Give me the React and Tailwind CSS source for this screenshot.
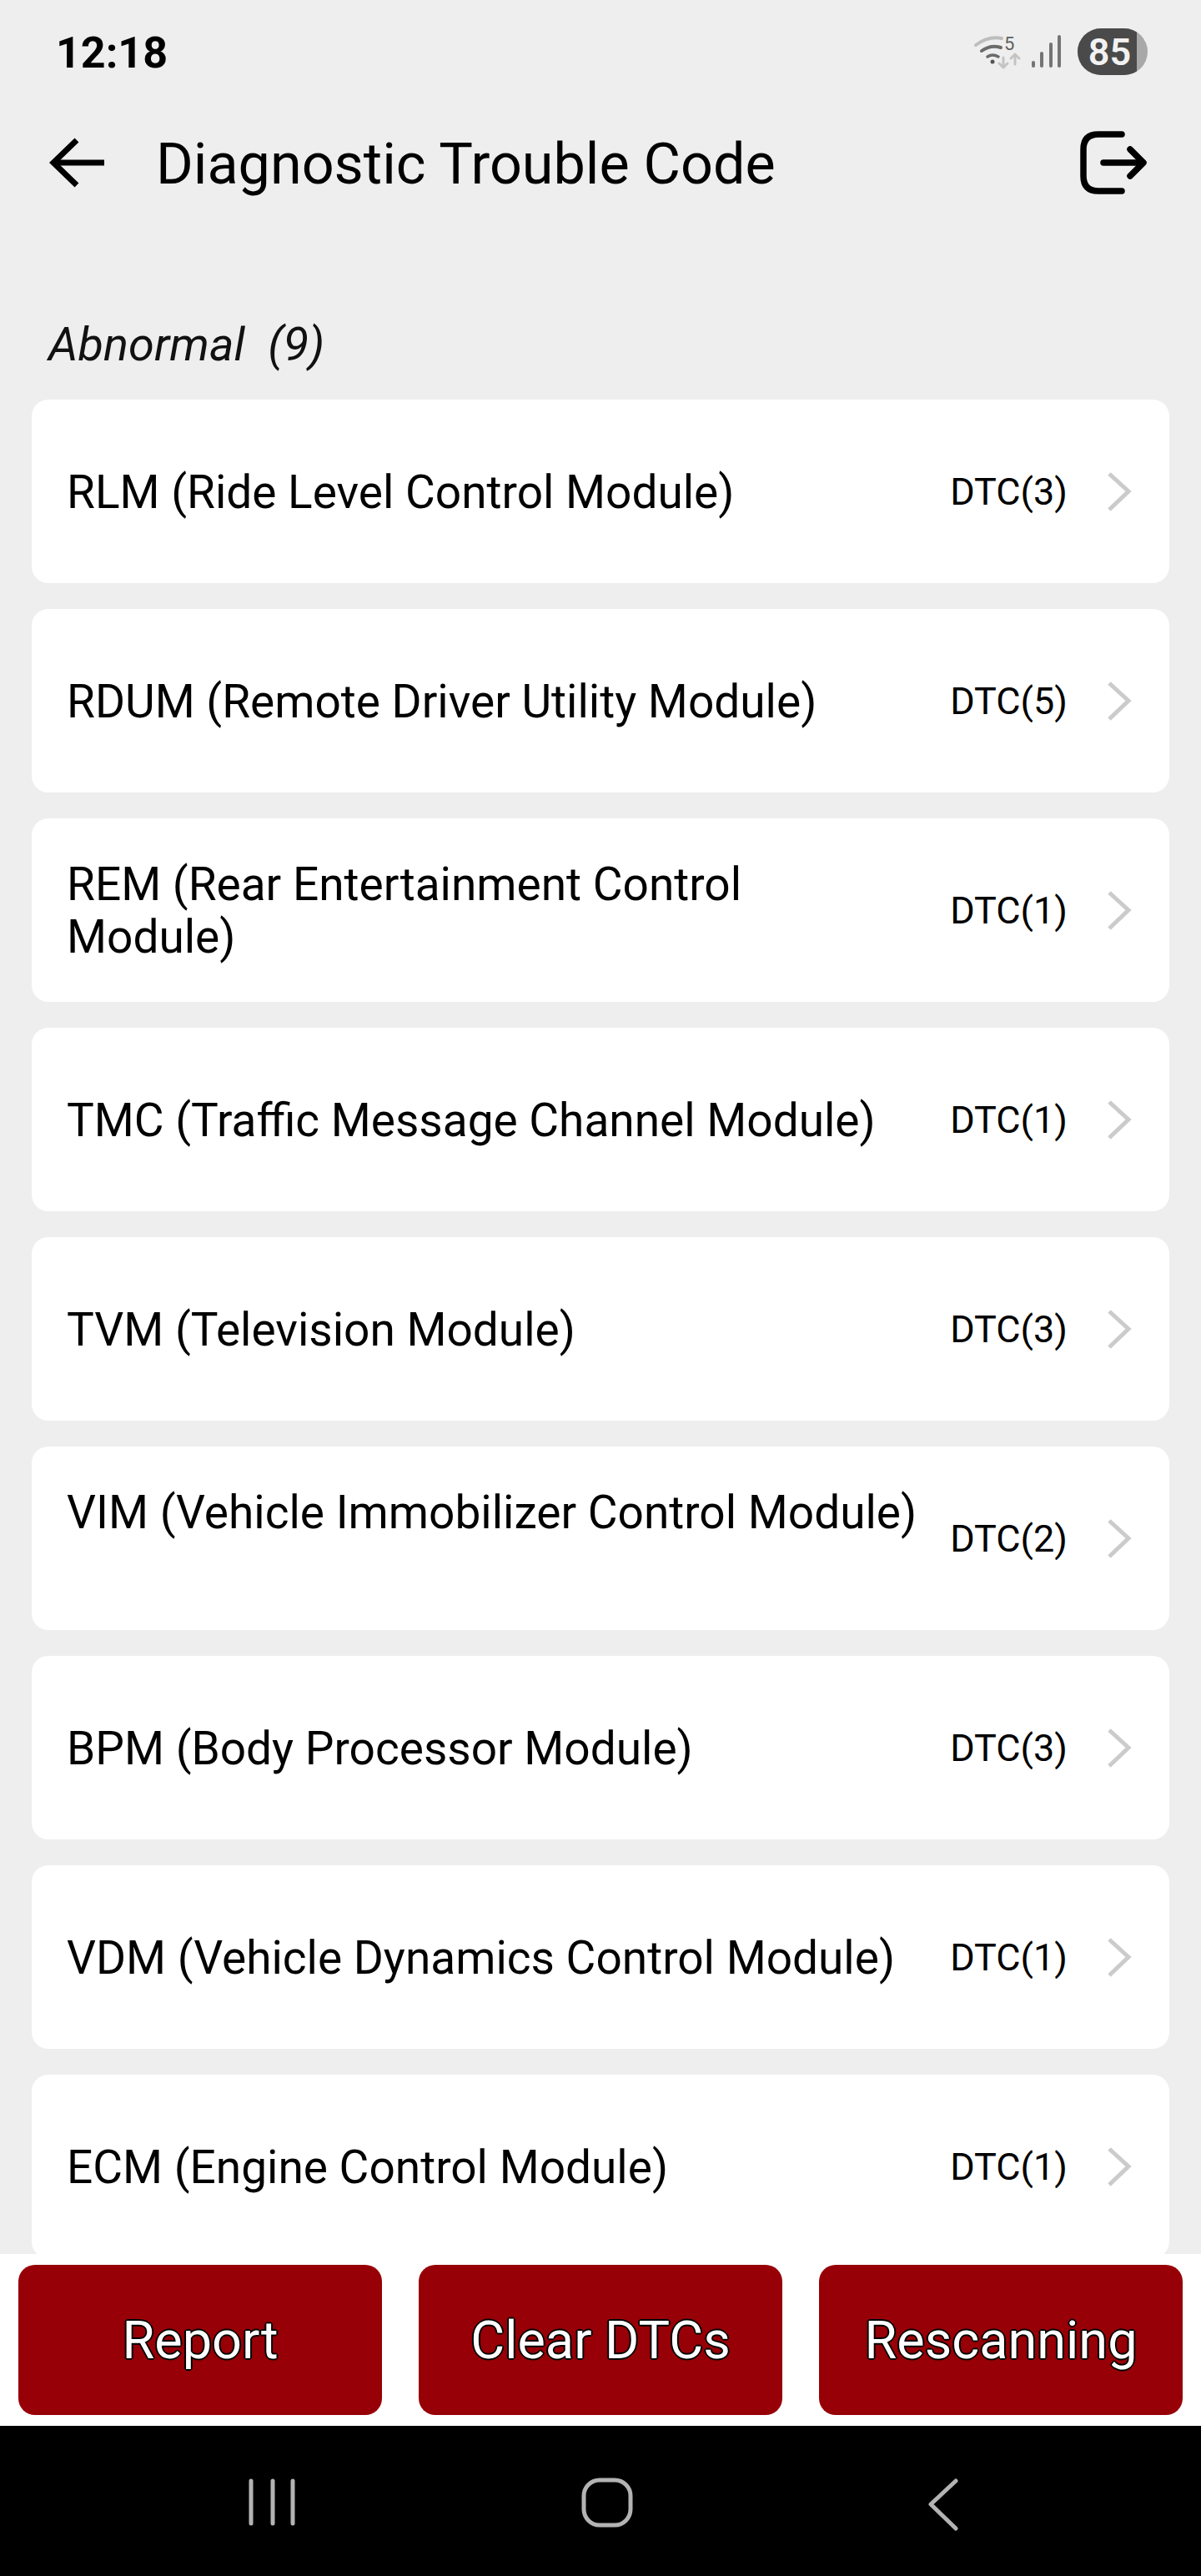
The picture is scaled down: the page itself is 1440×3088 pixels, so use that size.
import React from 'react';

const modules = [
    { name: 'RLM (Ride Level Control Module)', count: 3 },
    { name: 'RDUM (Remote Driver Utility Module)', count: 5 },
    { name: 'REM (Rear Entertainment Control Module)', count: 1 },
    { name: 'TMC (Traffic Message Channel Module)', count: 1 },
    { name: 'TVM (Television Module)', count: 3 },
    { name: 'VIM (Vehicle Immobilizer Control Module)', count: 2, raised: true },
    { name: 'BPM (Body Processor Module)', count: 3 },
    { name: 'VDM (Vehicle Dynamics Control Module)', count: 1 },
    { name: 'ECM (Engine Control Module)', count: 1 },
];

const StatusIcons = () => (
    <div className="flex items-center">
        <svg width="60" height="46" viewBox="1165 40 60 46" fill="none" strokeLinecap="round" strokeLinejoin="round">
            <path d="M1170 55 Q1185 44 1201 47" stroke="#bdbdbd" strokeWidth="4" />
            <path d="M1177 62 Q1188 54 1200 58" stroke="#6b6b6b" strokeWidth="4" />
            <path d="M1184 69 Q1190 65 1197 69" stroke="#6b6b6b" strokeWidth="3.5" />
            <circle cx="1190" cy="75" r="2.5" fill="#555" />
            <text x="1204" y="61" fontSize="22" fill="#5f5f5f" fontFamily="Roboto, sans-serif">5</text>
            <path d="M1203 70 V82 M1198 77 L1203 82 L1208 77" stroke="#c4c4c4" strokeWidth="3" />
            <path d="M1217 78 V66 M1212 71 L1217 66 L1222 71" stroke="#c4c4c4" strokeWidth="3" />
        </svg>
        <svg width="38" height="42" viewBox="1236 41 38 42" fill="none" className="ml-[11px]" stroke="#747474" strokeWidth="4" strokeLinecap="round">
            <path d="M1239 75 V79" />
            <path d="M1249 64 V79" />
            <path d="M1260 53 V79" />
            <path d="M1270 44 V79" />
        </svg>
        <div className="ml-[18px] w-[84px] h-[56px] rounded-full overflow-hidden bg-[#a8a8a8]">
            <div className="w-[71px] h-full bg-[#4a4a4a] flex items-center justify-center text-[45px] font-semibold leading-none text-[#f2f2f2] pl-[6px]">
                85
            </div>
        </div>
    </div>
);

const BackArrow = () => (
    <svg width="68" height="60" viewBox="59 165 68 60" fill="none" stroke="#000" strokeWidth="7">
        <path d="M125 195 H64" />
        <path d="M92 168 L64 195 L92 222" />
    </svg>
);

const ExitIcon = () => (
    <svg width="84" height="80" viewBox="1293 155 84 80" fill="none" stroke="#000" strokeWidth="7.5" strokeLinecap="round" strokeLinejoin="round">
        <path d="M1345 161 H1317 Q1299 161 1299 179 V211 Q1299 229 1317 229 H1345" />
        <path d="M1323 195 H1369" />
        <path d="M1355 179 L1371 195 L1355 211" />
    </svg>
);

const Chevron = () => (
    <svg width="30" height="47" viewBox="1328 565 30 47" fill="none" stroke="#cbcbcb" strokeWidth="5" className="ml-[47px] shrink-0">
        <path d="M1331 567 L1354 588 L1331 610" />
    </svg>
);

const ModuleRow = ({ item }) => (
    <div className="shrink-0 h-[220px] bg-white rounded-[20px] flex items-center pl-[42px] pr-[45px]">
        <div className={`w-[1019px] text-[55px] leading-[63px] text-black pt-[2px] ${item.raised ? 'pb-[63px] whitespace-nowrap' : ''}`}>
            {item.name}
        </div>
        <div className="flex-1 flex justify-end text-[45px] text-black pt-[1px]">DTC({item.count})</div>
        <Chevron />
    </div>
);

const ActionButton = ({ label }) => (
    <div className="w-[436px] h-[180px] rounded-[20px] bg-[#960006] flex items-center justify-center pt-[3px] text-white text-[63px] [text-shadow:-2px_0_0_#000,2px_0_0_#000,0_-2px_0_#000,0_2px_0_#000,-1px_-1px_0_#000,1px_1px_0_#000,1px_-1px_0_#000,-1px_1px_0_#000]">
        {label}
    </div>
);

const NavBar = () => (
    <div className="h-[180px] bg-black flex items-start justify-between pt-[62px] pl-[298px] pr-[290px]">
        <svg width="56" height="60" viewBox="296 2971 56 60" fill="none" stroke="#b3b3b3" strokeWidth="5" strokeLinecap="round">
            <path d="M299 2975 V3026" />
            <path d="M325 2975 V3026" />
            <path d="M349 2975 V3026" />
        </svg>
        <svg width="62" height="60" viewBox="696 2971 62 60" fill="none" stroke="#b3b3b3" strokeWidth="5" className="mr-[10px]">
            <rect x="699" y="2974" width="56" height="54" rx="19" />
        </svg>
        <svg width="38" height="64" viewBox="1112 2969 38 64" fill="none" stroke="#b3b3b3" strokeWidth="5" strokeLinecap="round" strokeLinejoin="round">
            <path d="M1146 2973 L1116 3001 M1116 3001 L1146 3030" />
        </svg>
    </div>
);

const App = () => {
    return (
        <div className="w-[1440px] h-[3088px] flex flex-col bg-[#eeeeee] font-['Roboto',sans-serif] overflow-hidden">
            <div className="h-[124px] shrink-0 flex items-center justify-between pl-[67px] pr-[64px]">
                <div className="text-[52px] font-bold text-black pt-[3px]">12:18</div>
                <StatusIcons />
            </div>

            <div className="h-[142px] shrink-0 flex items-center pl-[59px] pr-[63px]">
                <BackArrow />
                <div className="flex-1 ml-[60px] text-[68.3px] text-black pt-[4px]">Diagnostic Trouble Code</div>
                <ExitIcon />
            </div>

            <div className="h-[213px] shrink-0 pl-[58px] pt-[116px] text-[56px] leading-[63px] italic text-[#111] whitespace-pre">
                Abnormal  (9)
            </div>

            <div className="flex-1 min-h-0 overflow-hidden px-[38px] flex flex-col gap-[31px]">
                {modules.map((item) => (
                    <ModuleRow key={item.name} item={item} />
                ))}
            </div>

            <div className="h-[206px] shrink-0 bg-white flex justify-between px-[22px] pt-[13px]">
                <ActionButton label="Report" />
                <ActionButton label="Clear DTCs" />
                <ActionButton label="Rescanning" />
            </div>

            <NavBar />
        </div>
    );
};

export default App;
